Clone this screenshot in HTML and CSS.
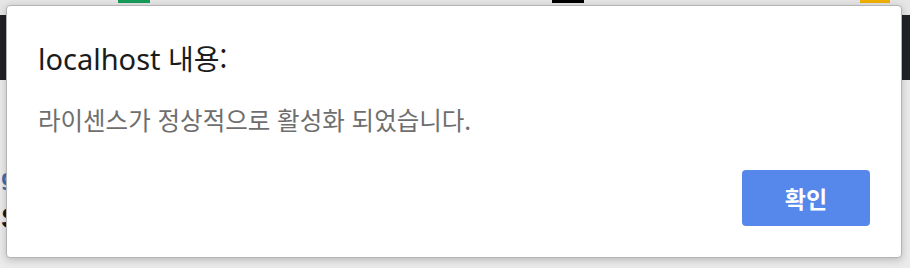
FILE: index.html
```html
<!DOCTYPE html>
<html lang="ko">
<head>
<meta charset="utf-8">
<title>localhost</title>
<link rel="stylesheet" href="styles.css">
</head>
<body>
<div class="page">
  <div class="tabstrip">
    <span class="tab tab-green"></span>
    <span class="tab tab-black"></span>
    <span class="tab tab-yellow"></span>
  </div>
  <div class="navbar"></div>
  <div class="content">
    <div class="link-frag">g</div>
    <div class="head-frag">S</div>
  </div>
</div>
<div class="dialog" role="alertdialog">
  <div class="dialog-title">localhost <span class="ko">내용:</span></div>
  <div class="dialog-msg">라이센스가 정상적으로 활성화 되었습니다.</div>
  <div class="dialog-actions">
    <button class="btn-ok">확인</button>
  </div>
</div>
</body>
</html>
```
FILE: styles.css
```css
html, body {
  margin: 0;
  padding: 0;
  width: 910px;
  height: 268px;
  overflow: hidden;
}
body {
  background: #e9e9e9;
  font-family: "Noto Sans", "Noto Sans CJK KR", sans-serif;
  position: relative;
}
.page {
  display: flex;
  flex-direction: column;
  height: 268px;
}
.tabstrip {
  height: 15px;
  background: #e6e6e6;
  display: flex;
  align-items: flex-start;
}
.tab {
  display: block;
  height: 3px;
}
.tab-green {
  width: 32px;
  margin-left: 118px;
  background: #169c5a;
}
.tab-black {
  width: 32px;
  margin-left: 402px;
  background: #000;
}
.tab-yellow {
  width: 30px;
  margin-left: 276px;
  background: #f2b000;
}
.navbar {
  height: 65px;
  background: #202226;
}
.content {
  flex: 1;
  background: #ebebeb;
  display: flex;
  flex-direction: column;
  padding-top: 84px;
}
.link-frag {
  padding-left: 1px;
  color: #3c6fb0;
  font-size: 22px;
  font-weight: 700;
  line-height: 24px;
  height: 24px;
}
.head-frag {
  padding-left: 1px;
  margin-top: 14px;
  color: #1a1a1a;
  font-family: "Liberation Sans", sans-serif;
  font-size: 30px;
  font-weight: 700;
  line-height: 32px;
}
.dialog {
  position: absolute;
  left: 6px;
  top: 5px;
  width: 896px;
  height: 253px;
  box-sizing: border-box;
  background: #fff;
  border: 1px solid #b4b4b4;
  border-radius: 4px;
  box-shadow: 0 2px 8px rgba(0, 0, 0, 0.22);
  padding: 34px 31px 31px 31px;
  display: flex;
  flex-direction: column;
}
.dialog-title {
  font-family: "Noto Sans", "Noto Sans CJK KR", sans-serif;
  font-size: 29px;
  line-height: 36px;
  color: #1b1b1b;
}
.dialog-title .ko {
  font-family: "Noto Sans CJK KR", sans-serif;
  font-size: 28px;
}
.dialog-msg {
  margin-top: 28px;
  font-family: "Noto Sans CJK KR", sans-serif;
  font-size: 24.5px;
  line-height: 30px;
  color: #6e6e6e;
}
.dialog-actions {
  margin-top: auto;
  display: flex;
  justify-content: flex-end;
}
.btn-ok {
  width: 128px;
  height: 56px;
  border: none;
  border-radius: 4px;
  background: #5588ea;
  color: #fff;
  font-family: "Noto Sans CJK KR", sans-serif;
  font-size: 23px;
  font-weight: 700;
  padding: 0;
}
```
